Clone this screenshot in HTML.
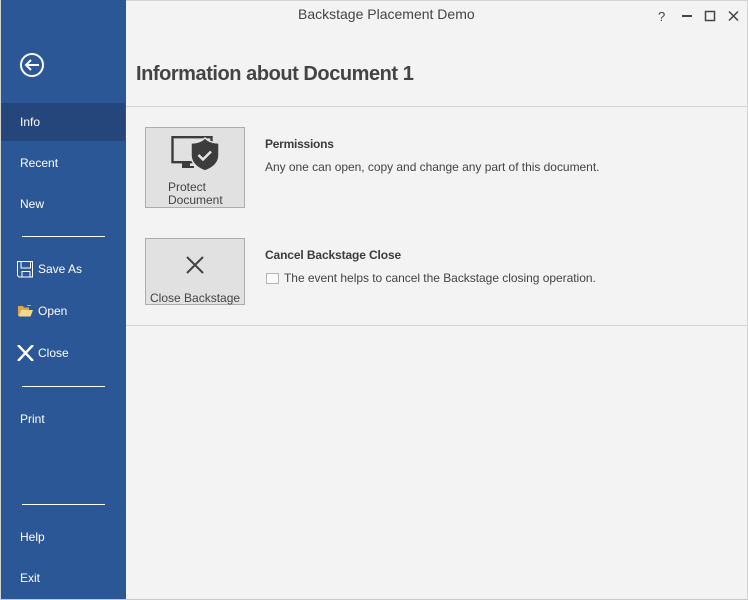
<!DOCTYPE html>
<html><head><meta charset="utf-8"><style>
html,body{margin:0;padding:0}
body{width:748px;height:600px;position:relative;overflow:hidden;background:#f3f3f3;font-family:"Liberation Sans",sans-serif;font-size:12px;color:#3c3c3c}
.a{position:absolute;white-space:nowrap}
.side{position:absolute;left:1px;top:0;width:125px;height:599px;background:#2b5797}
.m{position:absolute;color:#fff;white-space:nowrap;line-height:16px;font-size:12px}
.sep{position:absolute;left:22px;width:83px;height:1px;background:#fff}
.btn{position:absolute;left:145px;width:98px;background:#e1e1e1;border:1px solid #adadad}
.hr{position:absolute;left:126px;right:1px;height:1px;background:#d6d6d6}
.t{text-align:center;line-height:13px;color:#444;font-size:12px}
</style></head><body>
<div class="a" style="left:0;top:0;width:748px;height:1px;background:#d4d4d4"></div>
<div class="a" style="left:0;top:599px;width:748px;height:1px;background:#c8c8c8"></div>
<div class="a" style="left:747px;top:0;width:1px;height:600px;background:#d4d4d4"></div>
<div class="a" style="left:0;top:0;width:1px;height:600px;background:#d4d4d4"></div>
<div class="side"></div>
<div class="a" style="left:1px;top:103px;width:124px;height:38px;background:#24467a"></div>
<svg class="a" style="left:19px;top:52px" width="26" height="26" viewBox="0 0 26 26" fill="none" stroke="#fff" stroke-width="2"><circle cx="13" cy="13" r="11"/><path d="M20 13H7M12 8l-5 5 5 5"/></svg>
<div class="m" style="left:20px;top:114px">Info</div>
<div class="m" style="left:20px;top:155px">Recent</div>
<div class="m" style="left:20px;top:196px">New</div>
<div class="sep" style="top:236px"></div>
<svg class="a" style="left:17px;top:261px" width="17" height="17" viewBox="0 0 17 17" fill="none" stroke="#fff" stroke-width="1"><path d="M.5.5h15v15.500H2L.5 14.500zM4 .5v6.500h9.500V.5M5 16v-5.500h8V16"/></svg>
<div class="m" style="left:38px;top:261px">Save As</div>
<svg class="a" style="left:18px;top:304px" width="15" height="13" viewBox="0 0 15 13"><path d="M0 2h5l1 1.500h5V6H3L1 12H0z" fill="#d9a94e"/><path d="M3 6h12l-2.500 6.500H.8z" fill="#f6d88c"/><path d="M9 1.500h4" stroke="#aab" stroke-width="1"/></svg>
<div class="m" style="left:38px;top:303px">Open</div>
<svg class="a" style="left:17px;top:345px" width="17" height="16" viewBox="0 0 17 16" fill="none" stroke="#fff" stroke-width="2.400"><path d="M1 0l15 16M16 0L1 16"/></svg>
<div class="m" style="left:38px;top:345px">Close</div>
<div class="sep" style="top:386px"></div>
<div class="m" style="left:20px;top:411px">Print</div>
<div class="sep" style="top:504px"></div>
<div class="m" style="left:20px;top:529px">Help</div>
<div class="m" style="left:20px;top:570px">Exit</div>

<div class="a" style="left:298px;top:6px;font-size:14px;color:#444">Backstage Placement Demo</div>
<div class="a" style="left:658px;top:9px;font-size:13px;color:#444">?</div>
<svg class="a" style="left:680px;top:9px" width="60" height="14" viewBox="0 0 60 14" fill="none" stroke="#444"><path d="M2 7h10" stroke-width="2"/><path d="M25.500 2.500h9v9h-9z" stroke-width="1.500"/><path d="M49 2.500l9 9M58 2.500l-9 9" stroke-width="1.500"/></svg>

<div class="a" style="left:136px;top:63px;font-size:20px;font-weight:bold;color:#444;letter-spacing:-.45px">Information about Document 1</div>
<div class="hr" style="top:106px"></div>

<div class="btn" style="top:127px;height:79px"></div>
<svg class="a" style="left:170px;top:135px" width="50" height="37" viewBox="0 0 50 37"><path d="M2.500 2.200h39v25h-39z" fill="none" stroke="#3c3c3c" stroke-width="2.400"/><path d="M12 28h8v3h4v2H12z" fill="#3c3c3c"/><path d="M35 3c3 3 8 5 14 5v12c0 8-6 13-14 16-8-3-14-8-14-16V8c6 0 11-2 14-5z" fill="#3c3c3c" stroke="#e1e1e1" stroke-width="1.500"/><path d="M28.500 20l4.500 4.500 8-8" fill="none" stroke="#e6e6e6" stroke-width="2.500"/></svg>
<div class="a t" style="left:168px;top:181px;text-align:left">Protect<br>Document</div>

<div class="a" style="left:265px;top:137px;font-weight:bold;font-size:12px;letter-spacing:-.25px;color:#3c3c3c">Permissions</div>
<div class="a" style="left:265px;top:160px;font-size:12px;letter-spacing:-.03px;color:#444">Any one can open, copy and change any part of this document.</div>

<div class="btn" style="top:238px;height:65px"></div>
<svg class="a" style="left:186px;top:256px" width="18" height="18" viewBox="0 0 18 18" fill="none" stroke="#444" stroke-width="2"><path d="M1 1l16 16M17 1L1 17"/></svg>
<div class="a t" style="left:150px;top:292px">Close Backstage</div>

<div class="a" style="left:265px;top:248px;font-weight:bold;font-size:12px;letter-spacing:-.12px;color:#3c3c3c">Cancel Backstage Close</div>
<div class="a" style="left:266px;top:273px;width:11px;height:9px;background:#fafafa;border:1px solid #b4b4b4"></div>
<div class="a" style="left:284px;top:271px;font-size:12px;letter-spacing:-.03px;color:#444">The event helps to cancel the Backstage closing operation.</div>
<div class="hr" style="top:325px"></div>
</body></html>
